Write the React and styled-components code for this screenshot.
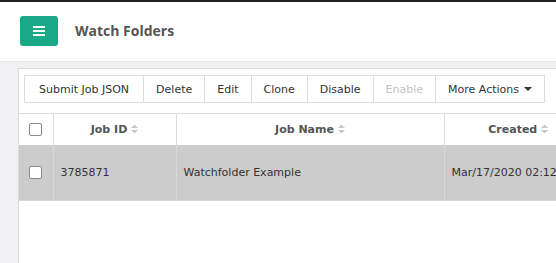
import styled, { createGlobalStyle } from "styled-components";

const colors = {
    green: '#19a986',
    bg: '#f1f1f3',
    border: '#dddddd',
    text: '#333333',
    heading: '#555555',
    selected: '#cccccc',
};

const GlobalStyle = createGlobalStyle`
    body {
        margin: 0;
        background: ${colors.bg};
        overflow: hidden;
    }
`;

const TopBar = styled.div`
    height: 2px;
    background: #222;
`;

const Header = styled.header`
    height: 60px;
    background: #fff;
    border-bottom: 1px solid #e4e4e6;
    box-sizing: border-box;
    display: flex;
    align-items: center;
    gap: 17px;
    padding: 0 0 2px 20px;
`;

const MenuButton = styled.button`
    width: 38px;
    height: 30px;
    border: none;
    border-radius: 3px;
    background: ${colors.green};
    display: flex;
    align-items: center;
    justify-content: center;
    padding: 0;
`;

const Title = styled.h1`
    margin: 0;
    font-family: 'Open Sans', sans-serif;
    font-weight: 700;
    font-size: 14px;
    color: ${colors.heading};
`;

const Main = styled.main`
    padding: 6px 0 0 18px;
`;

const Panel = styled.section`
    width: 720px;
    height: 220px;
    background: #fff;
    border: 1px solid ${colors.border};
    padding-top: 6px;
    font-family: 'DejaVu Sans', Verdana, sans-serif;
    font-size: 11px;
    color: ${colors.text};
`;

const Toolbar = styled.div`
    display: flex;
    margin: 0 0 10px 5px;
`;

const ToolButton = styled.button`
    height: 28px;
    padding: 0 ${props => props.$wide ? '14px' : '12px'};
    background: #fff;
    border: 1px solid ${colors.border};
    margin-left: -1px;
    font-family: inherit;
    font-size: 11px;
    color: ${props => props.disabled ? '#c4c4c4' : colors.text};
    display: flex;
    align-items: center;
    gap: 5px;
    &:first-child {
        margin-left: 0;
    }
`;

const Table = styled.table`
    border-collapse: collapse;
    width: 573px;
    table-layout: fixed;
    white-space: nowrap;
`;

const Th = styled.th`
    height: 31px;
    padding: 0;
    border-top: 1px solid ${colors.border};
    border-left: 1px solid ${colors.border};
    font-weight: 700;
    color: ${colors.heading};
    text-align: center;
    &:first-child {
        border-left: none;
    }
`;

const Row = styled.tr`
    background: ${colors.selected};
`;

const Td = styled.td`
    height: 55px;
    padding: 0 7px;
    border-left: 1px solid #d9d9d9;
    border-bottom: 1px solid #d6d6d6;
    overflow: visible;
    &:first-child {
        border-left: none;
        text-align: center;
        padding: 0;
    }
`;

const Check = styled.span`
    display: inline-block;
    width: 11px;
    height: 11px;
    border: 1px solid #8a8a8a;
    border-radius: 2px;
    background: #fff;
    vertical-align: middle;
`;

const SortIcon = () => (
    <svg width="7" height="10" viewBox="0 0 7 10" style={{ marginLeft: 4, verticalAlign: -1 }}>
        <path d="M0 4 L3.5 0.5 L7 4 Z" fill="#c8c8c8" />
        <path d="M0 6 L3.5 9.5 L7 6 Z" fill="#c8c8c8" />
    </svg>
);

const columns = [
    { key: 'id', title: 'Job ID', width: 123 },
    { key: 'name', title: 'Job Name', width: 268 },
    { key: 'created', title: 'Created', width: 148 },
];

const rows = [
    { id: '3785871', name: 'Watchfolder Example', created: 'Mar/17/2020 02:12 PM' },
];

const actions = ['Submit Job JSON', 'Delete', 'Edit', 'Clone', 'Disable', 'Enable'];

export default function App() {
    return (
        <>
            <GlobalStyle />
            <TopBar />
            <Header>
                <MenuButton>
                    <svg width="12" height="10" viewBox="0 0 12 10">
                        <rect x="0" y="0" width="12" height="2" fill="#fff" />
                        <rect x="0" y="4" width="12" height="2" fill="#fff" />
                        <rect x="0" y="8" width="12" height="2" fill="#fff" />
                    </svg>
                </MenuButton>
                <Title>Watch Folders</Title>
            </Header>
            <Main>
                <Panel>
                    <Toolbar>
                        {actions.map((a, i) => (
                            <ToolButton key={a} $wide={i === 0} disabled={a === 'Enable'}>{a}</ToolButton>
                        ))}
                        <ToolButton>
                            More Actions
                            <svg width="8" height="4" viewBox="0 0 8 4">
                                <path d="M0 0 L8 0 L4 4 Z" fill="#333" />
                            </svg>
                        </ToolButton>
                    </Toolbar>
                    <Table>
                        <colgroup>
                            <col style={{ width: 34 }} />
                            {columns.map(c => <col key={c.key} style={{ width: c.width }} />)}
                        </colgroup>
                        <thead>
                            <tr>
                                <Th><Check /></Th>
                                {columns.map(c => (
                                    <Th key={c.key}>{c.title}<SortIcon /></Th>
                                ))}
                            </tr>
                        </thead>
                        <tbody>
                            {rows.map(r => (
                                <Row key={r.id}>
                                    <Td><Check /></Td>
                                    {columns.map(c => <Td key={c.key}>{r[c.key]}</Td>)}
                                </Row>
                            ))}
                        </tbody>
                    </Table>
                </Panel>
            </Main>
        </>
    );
}
